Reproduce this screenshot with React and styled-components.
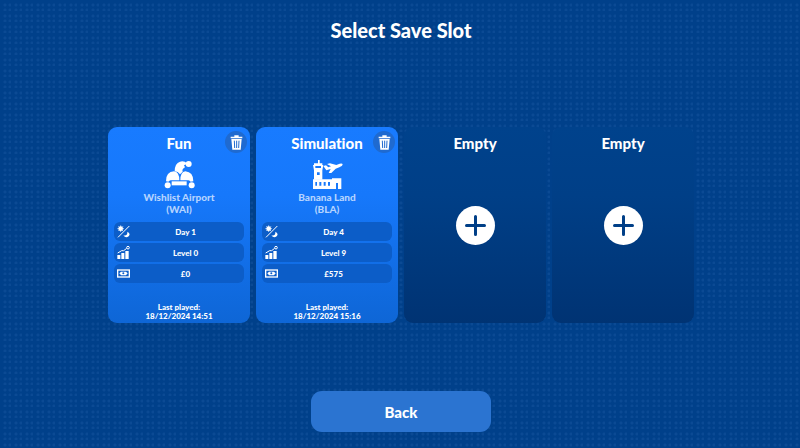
import styled, { createGlobalStyle } from 'styled-components';

const GlobalStyle = createGlobalStyle`
  * {
    box-sizing: border-box;
  }

  body {
    margin: 0;
    background: #003f87;
  }
`;

const Page = styled.div`
  min-height: 100vh;
  padding: 15px 0 16px 2px;
  display: flex;
  flex-direction: column;
  align-items: center;
  font-family: 'Lato', 'Noto Sans', sans-serif;
  font-weight: 900;
  font-variant-ligatures: none;
  color: #ffffff;
  background-color: #00408a;
  background-image:
    radial-gradient(circle at 5px 5px, #0b4a94 1px, transparent 2px),
    radial-gradient(circle at 10px 5px, #0b4a94 1px, transparent 2px),
    radial-gradient(circle at 5px 10px, #0b4a94 1px, transparent 2px),
    radial-gradient(circle at 10px 10px, #0b4a94 1px, transparent 2px);
  background-size: 11px 11px;
`;

const PageTitle = styled.h1`
  margin: 0 0 14px;
  font-size: 20px;
  font-weight: 900;
  line-height: 30px;
`;

const SlotArea = styled.main`
  flex: 1;
  width: 100%;
  display: flex;
  align-items: center;
  justify-content: center;
`;

const SlotGrid = styled.div`
  width: 100%;
  max-width: 586px;
  display: grid;
  grid-template-columns: repeat(4, 1fr);
  gap: 6px;
`;

const SlotCard = styled.article`
  position: relative;
  min-height: 196px;
  padding: 5px 6px 2px;
  display: flex;
  flex-direction: column;
  align-items: center;
  text-align: center;
  border-radius: 9px;
  background: ${props => props.$empty
    ? 'linear-gradient(#00428c, #003f87 35%, #003373)'
    : 'linear-gradient(#187bff, #1678fb 35%, #0e66d6)'};
`;

const SlotName = styled.h2`
  margin: 0;
  font-size: 15px;
  font-weight: 900;
  line-height: 22px;
`;

const ModeIcon = styled.svg`
  width: 31px;
  height: 29px;
  margin-top: 6px;
  fill: #ffffff;
`;

const AirportName = styled.p`
  margin: 2px 0 7px;
  font-size: 10px;
  line-height: 12px;
  color: #b4d3ff;
`;

const StatList = styled.ul`
  width: 100%;
  margin: 0;
  padding: 0;
  display: grid;
  gap: 2px;
  list-style: none;
`;

const StatRow = styled.li`
  height: 19px;
  padding: 0 3px;
  display: grid;
  grid-template-columns: 13px 1fr;
  align-items: center;
  border-radius: 6px;
  background: #0c5dc8;
  font-size: 8px;
`;

const StatIcon = styled.svg`
  width: 13px;
  height: 13px;
  fill: #ffffff;
`;

const LastPlayed = styled.p`
  margin: auto 0 0;
  font-size: 8px;
  line-height: 9px;
`;

const DeleteButton = styled.button`
  position: absolute;
  top: 4px;
  right: 3px;
  width: 22px;
  height: 22px;
  padding: 0;
  display: grid;
  place-items: center;
  border: none;
  border-radius: 50%;
  background: #1f6ad0;
  cursor: pointer;
`;

const AddButton = styled.button`
  width: 39px;
  height: 39px;
  margin: auto;
  padding: 0;
  display: grid;
  place-items: center;
  border: none;
  border-radius: 50%;
  background: #ffffff;
  cursor: pointer;
`;

const AddArea = styled.div`
  flex: 1;
  display: flex;
  padding-bottom: 24px;
`;

const BackButton = styled.button`
  width: 180px;
  height: 41px;
  border: none;
  border-radius: 11px;
  background: #2b74d1;
  color: #ffffff;
  font-family: inherit;
  font-size: 15px;
  font-weight: 900;
  cursor: pointer;
`;

const FunIcon = () => (
  <ModeIcon viewBox="190 120 93 87" aria-hidden="true">
    <circle cx="264" cy="132" r="9" />
    <path d="M222 154Q222 130 238 125Q250 121 260 131L250 136L253 142Q243 147 246 155L238 163Q232 154 222 154Z" />
    <path d="M196 184Q196 155 220 154Q236 156 236 181L213 181Q207 179 203 185Z" />
    <path d="M239 181Q239 156 254 154Q278 156 278 184L270 185Q267 179 260 181Z" />
    <rect x="213" y="184" width="45" height="12" />
    <circle cx="201" cy="196" r="9" />
    <circle cx="273" cy="196" r="9" />
  </ModeIcon>
);

const SimulationIcon = () => (
  <ModeIcon viewBox="184 120 93 87" aria-hidden="true">
    <path d="M202 120h5v10h8v5h3l-3 16v28h-25v-28l-3-16h3v-5h12Z" />
    <path d="M187 178h57v-3h28v32h-10v-18h-6v18h-69Z" />
    <path d="M218 138l8-2 7 6 8-3-12-7 9-2 19 5 10-4q9-2 9 3-1 4-10 8l-11 4-13 13h-8l6-12-13 4Z" />
    <g fill="#1678fb">
      <path d="M194 138h17v6h-17ZM199 157h8v8h-8Z" />
      <path d="M194 186h5v11h-5ZM206 186h6v11h-6ZM219 186h6v11h-6ZM232 186h6v11h-6Z" />
    </g>
  </ModeIcon>
);

const DayIcon = () => (
  <StatIcon viewBox="0 0 39 39" aria-hidden="true">
    <circle cx="11" cy="11" r="7" />
    <path d="M11 1v20M1 11h20M4 4l14 14M18 4L4 18" stroke="#ffffff" strokeWidth="2" />
    <path d="M37 3L3 37" stroke="#ffffff" strokeWidth="3" />
    <path d="M31 20Q42 25 35 34Q26 41 19 31Q32 34 31 20Z" />
  </StatIcon>
);

const LevelIcon = () => (
  <StatIcon viewBox="0 0 39 39" aria-hidden="true">
    <path d="M1 27h9v12h-9ZM13 21h9v18h-9ZM25 15h10v24h-10Z" />
    <path d="M2 21L14 14L20 14L29 7" fill="none" stroke="#ffffff" strokeWidth="3" />
    <circle cx="33" cy="5" r="4" fill="none" stroke="#ffffff" strokeWidth="3" />
  </StatIcon>
);

const MoneyIcon = () => (
  <StatIcon viewBox="0 0 39 39" aria-hidden="true">
    <rect x="2" y="9" width="35" height="21" fill="none" stroke="#ffffff" strokeWidth="4" />
    <path d="M7 19l5-5h15l5 5-5 6H12Z" />
    <circle cx="19" cy="19" r="3" fill="#0c5dc8" />
  </StatIcon>
);

const TrashIcon = () => (
  <svg width="13" height="15" viewBox="0 0 39 45" fill="#ffffff" aria-hidden="true">
    <path d="M2 5h11V1h13v4h11v5H2Z" />
    <path d="M4 12h31l-3 32H7Z" />
    <path d="M13 17l1 22M20 17v22M27 17l-1 22" stroke="#1f6ad0" strokeWidth="3" />
  </svg>
);

const PlusIcon = () => (
  <svg width="21" height="21" viewBox="0 0 21 21" aria-hidden="true">
    <path d="M10.5 1.5v18M1.5 10.5h18" stroke="#003f87" strokeWidth="3" strokeLinecap="round" />
  </svg>
);

const slots = [
  {
    id: 1,
    name: 'Fun',
    icon: FunIcon,
    airport: 'Wishlist Airport',
    code: 'WAI',
    day: 1,
    level: 0,
    money: '£0',
    lastPlayed: '18/12/2024 14:51',
  },
  {
    id: 2,
    name: 'Simulation',
    icon: SimulationIcon,
    airport: 'Banana Land',
    code: 'BLA',
    day: 4,
    level: 9,
    money: '£575',
    lastPlayed: '18/12/2024 15:16',
  },
  { id: 3 },
  { id: 4 },
];

const EmptySlot = () => (
  <SlotCard $empty>
    <SlotName>Empty</SlotName>
    <AddArea>
      <AddButton aria-label="New save">
        <PlusIcon />
      </AddButton>
    </AddArea>
  </SlotCard>
);

const SaveSlot = ({ slot }) => {
  const Icon = slot.icon;

  return (
    <SlotCard>
      <SlotName>{slot.name}</SlotName>
      <DeleteButton aria-label={`Delete ${slot.name}`}>
        <TrashIcon />
      </DeleteButton>
      <Icon />
      <AirportName>
        {slot.airport}
        <br />
        ({slot.code})
      </AirportName>
      <StatList>
        <StatRow>
          <DayIcon />
          <span>Day {slot.day}</span>
        </StatRow>
        <StatRow>
          <LevelIcon />
          <span>Level {slot.level}</span>
        </StatRow>
        <StatRow>
          <MoneyIcon />
          <span>{slot.money}</span>
        </StatRow>
      </StatList>
      <LastPlayed>
        Last played:
        <br />
        {slot.lastPlayed}
      </LastPlayed>
    </SlotCard>
  );
};

const App = () => (
  <>
    <GlobalStyle />
    <Page>
      <PageTitle>Select Save Slot</PageTitle>
      <SlotArea>
        <SlotGrid>
          {slots.map(slot => (
            slot.name
              ? <SaveSlot key={slot.id} slot={slot} />
              : <EmptySlot key={slot.id} />
          ))}
        </SlotGrid>
      </SlotArea>
      <BackButton>Back</BackButton>
    </Page>
  </>
);

export default App;
